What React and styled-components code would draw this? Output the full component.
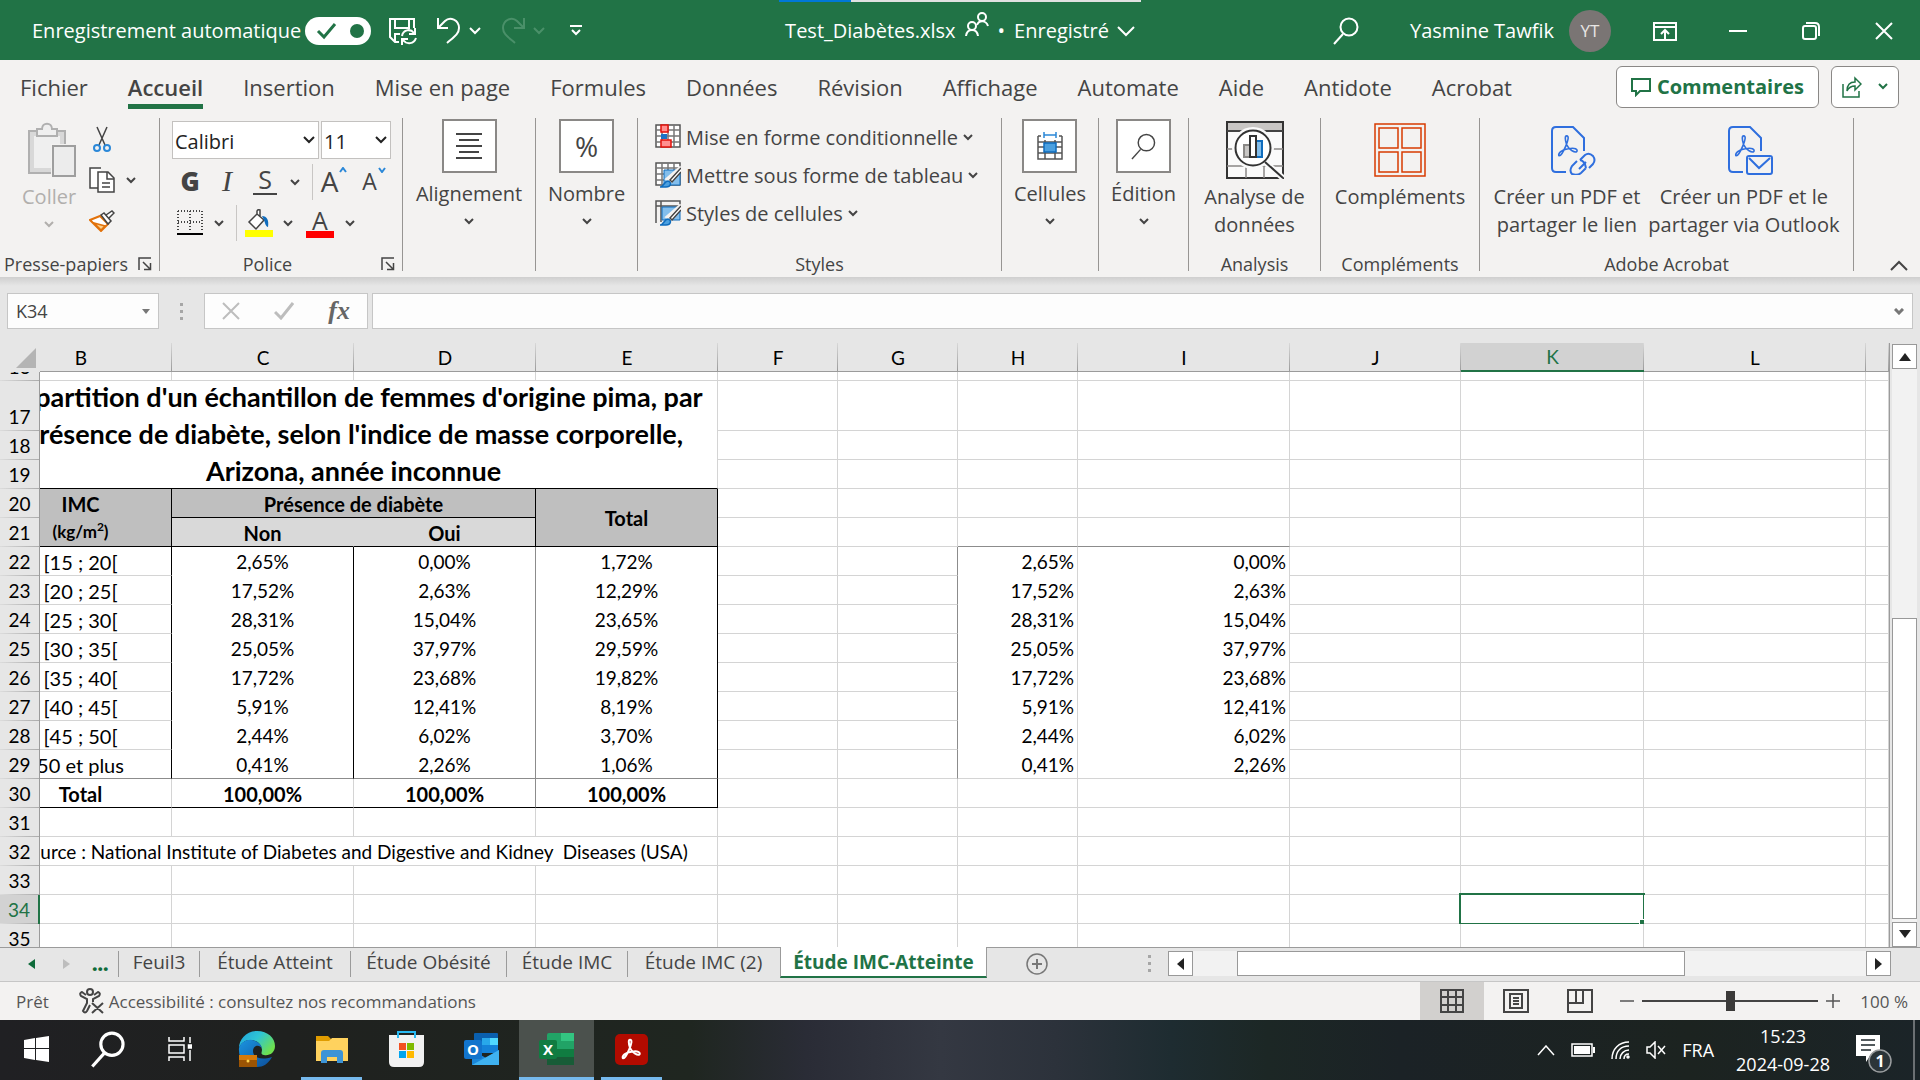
import React from "react";
import styled, { createGlobalStyle, css } from "styled-components";

const UI = `"Open Sans", "Noto Sans", sans-serif`;
const SHEET = `Lato, "Open Sans", sans-serif`;
const GREEN = "#217346";
const INK = "#444444";
const GRID = "#d4d4d4";
const GREY = "#8c8c8c";

const Global = createGlobalStyle`
  *, *::before, *::after { box-sizing: border-box; }
  body { margin: 0; font-family: ${UI}; color: ${INK}; overflow: hidden; }
  button, input, select { font: inherit; color: inherit; border-radius: 0; margin: 0; }
  button { background: none; border: 0; padding: 0; cursor: pointer; }
  svg { display: block; flex: none; }
`;

const Window = styled.div`
  display: flex;
  flex-direction: column;
  height: 100vh;
  background: #e6e6e6;
`;

/* ---------- small icons ---------- */

const Icon = ({ w, h, children, ...rest }) => (
  <svg width={w} height={h} viewBox={`0 0 ${w} ${h}`} fill="none" aria-hidden="true" {...rest}>
    {children}
  </svg>
);

const Chevron = ({ color = INK, w = 10, sw = 2 }) => (
  <Icon w={w} h={w / 2 + 2} stroke={color} strokeWidth={sw}>
    <path d={`M1 1 L${w / 2} ${w / 2} L${w - 1} 1`} />
  </Icon>
);

const Search = ({ w = 26, h = 28, color = "#fff", sw = 2 }) => (
  <svg width={w} height={h} viewBox="0 0 26 28" fill="none" stroke={color} strokeWidth={sw} aria-hidden="true">
    <circle cx="16" cy="10" r="8.5" />
    <path d="M10 17 L1 27" />
  </svg>
);

const Launcher = () => (
  <Icon w={14} h={14} stroke={INK} strokeWidth="1.5">
    <path d="M1 13V1H13M5 5L12 12M12.5 6V12.5H6" />
  </Icon>
);

/* ---------- title bar ---------- */

const TitleBar = styled.header`
  position: relative;
  display: grid;
  grid-template-columns: 1fr auto 1fr;
  align-items: center;
  height: 60px;
  padding-top: 2px;
  background: ${GREEN};
  color: #fff;
  font-size: 20px;
  line-height: 28px;
`;

const TitleGroup = styled.div`
  display: flex;
  align-items: center;
  gap: ${(p) => p.$gap}px;
  padding-left: ${(p) => p.$left || 0}px;
  justify-content: ${(p) => (p.$end ? "flex-end" : "flex-start")};
  white-space: nowrap;
`;

const TitleButton = styled.button`
  display: flex;
  align-items: center;
  gap: 8px;
  margin-left: ${(p) => p.$before || 0}px;
  margin-right: ${(p) => p.$after || 0}px;
`;

const Progress = styled.div`
  position: absolute;
  top: 0;
  left: 50%;
  margin-left: -181px;
  width: 362px;
  height: 2px;
  background: linear-gradient(to right, #0078d7 72px, #e1e1e1 72px);
`;

const AutoSave = styled.label`
  display: flex;
  align-items: center;
  gap: 4px;
  margin-right: 8px;
  cursor: pointer;
  input { position: absolute; opacity: 0; }
`;

const Avatar = styled.span`
  display: grid;
  place-items: center;
  width: 42px;
  height: 42px;
  border-radius: 50%;
  background: #7a7574;
  font-size: 17px;
  color: #e8e6e4;
`;

const WindowButtons = styled.div`
  display: flex;
  align-items: center;
  margin-left: 2px;
  button {
    display: grid;
    place-items: center;
    width: 73px;
    height: 40px;
  }
`;

function Title() {
  return (
    <TitleBar>
      <Progress />
      <TitleGroup $gap={10} $left={32}>
        <AutoSave>
          Enregistrement automatique
          <input type="checkbox" defaultChecked />
          <Icon w={66} h={28}>
            <rect width="66" height="28" rx="14" fill="#fff" />
            <path d="M13 14 L19 20 L30 7" stroke={GREEN} strokeWidth="3" />
            <circle cx="52" cy="14" r="7" fill={GREEN} />
          </Icon>
        </AutoSave>
        <TitleButton aria-label="Enregistrer">
          <Icon w={28} h={28} stroke="#fff" strokeWidth="2">
            <path d="M10 25H6L1 20V2H25V11" />
            <path d="M6 2V11H20V2M6 25V17H11" />
            <path d="M13 19C14 13 21 11 25 16M26 11V17H20M27 21C25 27 18 28 14 23M13 28V22H19" />
          </Icon>
        </TitleButton>
        <TitleButton aria-label="Annuler" $before={10}>
          <Icon w={24} h={28} stroke="#fff" strokeWidth="2">
            <path d="M1 1V11H11M1 11L8 4C13 -1 22 3 22 11C22 17 17 20 10 26" />
          </Icon>
          <Chevron color="#fff" w={12} />
        </TitleButton>
        <TitleButton aria-label="Rétablir" $before={10}>
          <Icon w={24} h={28} stroke="#4a9069" strokeWidth="2">
            <path d="M23 1V11H13M23 11L16 4C11 -1 2 3 2 11C2 17 7 20 14 26" />
          </Icon>
          <Chevron color="#4a9069" w={12} />
        </TitleButton>
        <TitleButton aria-label="Personnaliser" $before={14}>
          <Icon w={14} h={12} stroke="#fff" strokeWidth="2">
            <path d="M1 1H13M3 5L7 9L11 5" />
          </Icon>
        </TitleButton>
      </TitleGroup>
      <TitleGroup $gap={9}>
        Test_Diabètes.xlsx
        <Icon w={24} h={38} stroke="#fff" strokeWidth="2">
          <circle cx="17" cy="5" r="4" />
          <path d="M12 13C14 8 21 8 23 14" />
          <circle cx="7" cy="14" r="4" />
          <path d="M1 24C2 16 12 16 13 24" />
        </Icon>
        <span>•</span>
        <TitleButton>
          Enregistré
          <Chevron color="#fff" w={18} />
        </TitleButton>
      </TitleGroup>
      <TitleGroup $gap={15} $end>
        <TitleButton aria-label="Rechercher" $after={36}>
          <Search />
        </TitleButton>
        Yasmine Tawfik
        <Avatar>YT</Avatar>
        <WindowButtons>
          <button aria-label="Options du ruban">
            <Icon w={24} h={19} stroke="#fff" strokeWidth="2">
              <path d="M1 1H23V18H1ZM1 5H23M12 17V8M8 12L12 8L16 12" />
            </Icon>
          </button>
          <button aria-label="Réduire">
            <Icon w={18} h={2}><rect width="18" height="2" fill="#fff" /></Icon>
          </button>
          <button aria-label="Restaurer">
            <Icon w={18} h={18} stroke="#fff" strokeWidth="2">
              <rect x="1" y="4" width="13" height="13" rx="2" />
              <path d="M4 1H13Q17 1 17 5V14" />
            </Icon>
          </button>
          <button aria-label="Fermer">
            <Icon w={18} h={18} stroke="#fff" strokeWidth="2"><path d="M1 1L17 17M17 1L1 17" /></Icon>
          </button>
        </WindowButtons>
      </TitleGroup>
    </TitleBar>
  );
}

/* ---------- ribbon tabs ---------- */

const TabsRow = styled.nav`
  display: flex;
  align-items: center;
  height: 57px;
  padding: 0 21px 4px 20px;
  background: #f3f2f1;
`;

const RibbonTab = styled.button`
  height: 44px;
  margin-right: 40px;
  padding-top: 6px;
  border-bottom: 5px solid ${(p) => (p.$active ? GREEN : "transparent")};
  font-size: 22px;
  line-height: 30px;
  font-weight: ${(p) => (p.$active ? 600 : 400)};
  white-space: nowrap;
`;

const TabsSpacer = styled.div`
  flex: 1;
`;

const PillButton = styled.button`
  display: flex;
  align-items: center;
  justify-content: center;
  gap: ${(p) => p.$gap}px;
  width: ${(p) => p.$w}px;
  height: 42px;
  margin-left: 12px;
  border: 1px solid #8a8886;
  border-radius: 6px;
  background: #fff;
  color: ${GREEN};
  font-size: 20px;
  font-weight: 700;
`;

const TABS = ["Fichier", "Accueil", "Insertion", "Mise en page", "Formules", "Données", "Révision", "Affichage", "Automate", "Aide", "Antidote", "Acrobat"];

function Tabs() {
  return (
    <TabsRow>
      {TABS.map((t) => (
        <RibbonTab key={t} $active={t === "Accueil"}>{t}</RibbonTab>
      ))}
      <TabsSpacer />
      <PillButton $w={203} $gap={6}>
        <Icon w={20} h={20} stroke={GREEN} strokeWidth="2">
          <path d="M1 2H19V14H9L5 18V14H1Z" />
        </Icon>
        Commentaires
      </PillButton>
      <PillButton $w={68} $gap={16} aria-label="Partager">
        <Icon w={20} h={22} stroke={GREEN} strokeWidth="1.5">
          <path d="M1 8V21H17V15M5 15C5 9 8 6 13 6V2L19 8L13 14V10C9 10 7 11 5 15Z" />
        </Icon>
        <Chevron color={GREEN} w={10} />
      </PillButton>
    </TabsRow>
  );
}

/* ---------- ribbon ---------- */

const RibbonBar = styled.section`
  display: flex;
  height: 160px;
  background: #f3f2f1;
  font-size: 20px;
`;

const Group = styled.div`
  display: flex;
  flex-direction: column;
  flex: 0 0 ${(p) => p.$w}px;
`;

const Divider = styled.div`
  flex: 0 0 1px;
  height: 153px;
  margin-top: 1px;
  background: #979593;
`;

const GroupBody = styled.div`
  display: flex;
  flex: 1;
  justify-content: ${(p) => (p.$left ? "flex-start" : "center")};
  gap: ${(p) => p.$gap || 0}px;
  padding: ${(p) => p.$top || 0}px 0 0 ${(p) => p.$left || 0}px;
`;

const GroupFoot = styled.div`
  display: flex;
  align-items: center;
  height: 24px;
  padding-bottom: 2px;
  font-size: 18px;
  line-height: 22px;
  span { flex: 1; text-align: center; white-space: nowrap; }
  button { margin: 0 7px 0 6px; }
`;

const BigButton = styled.button`
  display: flex;
  flex-direction: column;
  align-items: center;
  align-self: flex-start;
  line-height: 28px;
  white-space: nowrap;
  color: ${(p) => (p.$off ? "#b1afad" : INK)};
  > svg:last-child { margin-top: 10px; }
`;

const BigIcon = styled.span`
  display: grid;
  place-items: center;
  height: 57px;
  margin-bottom: 5px;
  padding-left: ${(p) => p.$shift || 0}px;
`;

const BoxIcon = styled.span`
  display: grid;
  place-items: center;
  width: 55px;
  height: 54px;
  margin-bottom: 7px;
  border: 2px solid #8a8886;
  background: #fff;
  font-size: 28px;
`;

const Column = styled.div`
  display: flex;
  flex-direction: column;
  gap: ${(p) => p.$gap}px;
`;

const Line = styled.div`
  display: flex;
  align-items: center;
  height: ${(p) => p.$h}px;
`;

const Tool = styled.button`
  display: grid;
  place-items: center;
  align-content: center;
  width: ${(p) => p.$w}px;
  height: 100%;
  padding-bottom: ${(p) => (p.$text ? 3 : 0)}px;
  font-size: 24px;
  line-height: 28px;
`;

const ToolRule = styled.span`
  width: 1px;
  height: 36px;
  margin: 0 ${(p) => p.$r || 0}px 0 6px;
  background: #c8c6c4;
`;

const Picker = styled.span`
  display: grid;
  align-items: center;
  width: ${(p) => p.$w}px;
  height: 38px;
  margin-right: 2px;
  border: 1px solid #c3c1bf;
  background: #fff;
  color: #222;
  select {
    grid-area: 1 / 1;
    height: 100%;
    appearance: none;
    border: 0;
    padding: 2px 2px 0;
    background: transparent;
    font-size: 20px;
  }
  svg { grid-area: 1 / 1; justify-self: end; margin-right: 3px; pointer-events: none; }
`;

const StyleButton = styled.button`
  display: flex;
  align-items: center;
  gap: 5px;
  height: 38px;
  white-space: nowrap;
`;

const CollapseCell = styled.div`
  display: flex;
  flex: 1;
  align-items: flex-end;
  justify-content: flex-end;
  padding: 0 12px 6px 0;
`;

const Bold = styled.b`
  font-size: 26px;
  font-weight: 800;
`;

const Italic = styled.i`
  font-family: "Liberation Serif", serif;
  font-size: 30px;
`;

const Underlined = styled.span`
  padding: 0 5px;
  border-bottom: 2px solid ${INK};
  font-size: 25px;
  line-height: 27px;
`;

const SizedLetter = styled.span`
  display: flex;
  align-items: flex-start;
  gap: 1px;
  font-size: ${(p) => p.$size}px;
`;

const ColorLetter = styled.span`
  width: 28px;
  border-bottom: 7px solid #f00;
  font-size: 25px;
  line-height: 22px;
  text-align: center;
`;

const DataGrid = ({ children }) => (
  <Icon w={26} h={26}>
    <path d="M1 1H25V23H1Z" fill="#fff" stroke="#555" strokeWidth="1.5" />
    <path d="M1 6H25M1 12H25M1 18H25M7 1V23M13 1V23M19 1V23" stroke="#777" strokeWidth="1.5" />
    {children}
  </Icon>
);

const BrushMark = () => (
  <>
    <path d="M26 5L16 19L12 17Z" fill="#fff" stroke="#f3f2f1" strokeWidth="3" />
    <path d="M26 6L15 18L17 20L26 10" fill="#fff" stroke="#444" strokeWidth="1.5" />
    <path d="M5 25C9 25 9 19 13 19C17 20 16 25 11 25Z" fill="#4ba0e0" stroke="#0f6cbd" strokeWidth="1.5" />
  </>
);

const AcrobatMark = ({ color, scale = 1, x = 0, y = 0, sw = 1.6 }) => (
  <path
    transform={`translate(${x} ${y}) scale(${scale})`}
    d="M1 24C0 21 4 17 12 16C20 14 23 17 22 19C20 21 13 18 10 11C8 5 8 1 10 1C13 1 12 6 9 13C6 20 3 25 1 24Z"
    stroke={color}
    strokeWidth={sw / scale}
    strokeLinejoin="round"
  />
);

const PdfPage = () => (
  <>
    <path d="M16 47H6Q2 47 2 43V6Q2 2 6 2H23L34 13V26" stroke="#2f6fde" strokeWidth="2" />
    <AcrobatMark color="#2f6fde" scale={0.86} x={8} y={10} />
  </>
);

function Ribbon() {
  return (
    <RibbonBar>
      <Group $w={159}>
        <GroupBody $left={22} $gap={13} $top={4}>
          <BigButton $off>
            <BigIcon $shift={5}>
              <Icon w={49} h={55}>
                <path d="M2 9H38V51H2Z" fill="#d8d8d8" stroke="#b0b0b0" strokeWidth="2" />
                <path d="M7 14H33V46H7Z" fill="#efefef" />
                <path d="M10 14V7H15C15 0 25 0 25 7H30V14Z" fill="#efefef" stroke="#b0b0b0" strokeWidth="2" />
                <path d="M24 22H49V55H24Z" fill="#f3f2f1" />
                <path d="M26 24H48V54H26Z" fill="#ececec" stroke="#9e9e9e" strokeWidth="2" />
              </Icon>
            </BigIcon>
            Coller
            <Chevron color="#b1afad" />
          </BigButton>
          <Column $gap={5}>
            <Line $h={36}>
              <Tool $w={26} aria-label="Couper">
                <Icon w={18} h={27} strokeWidth="1.5">
                  <path d="M4 1L12 19M14 1L6 19" stroke="#444" />
                  <circle cx="4" cy="22" r="3" stroke="#2b88d8" strokeWidth="2" />
                  <circle cx="14" cy="22" r="3" stroke="#2b88d8" strokeWidth="2" />
                </Icon>
              </Tool>
            </Line>
            <Line $h={36}>
              <Tool $w={26} aria-label="Copier">
                <Icon w={26} h={26} stroke="#444" strokeWidth="1.5">
                  <path d="M9 21H1V1H12" fill="#fff" />
                  <path d="M9 5H19L25 11V25H9Z" fill="#fff" />
                  <path d="M18 5V12H25M13 16H21M13 20H21" />
                </Icon>
              </Tool>
              <Tool $w={32} aria-label="Options de copie"><Chevron /></Tool>
            </Line>
            <Line $h={36}>
              <Tool $w={26} aria-label="Reproduire la mise en forme">
                <Icon w={26} h={22} strokeWidth="1.5">
                  <path d="M1 10L11 6L19 14L12 21Z" fill="#fff" stroke="#e2720b" strokeWidth="2" />
                  <path d="M5 13L16 16L12 20Z" fill="#fbd08a" stroke="#e2720b" />
                  <path d="M12 5L15 3L22 11L19 14ZM17 5L23 1L25 3L20 8" fill="#fff" stroke="#444" />
                </Icon>
              </Tool>
            </Line>
          </Column>
        </GroupBody>
        <GroupFoot><span>Presse-papiers</span><button aria-label="Options du presse-papiers"><Launcher /></button></GroupFoot>
      </Group>
      <Divider />
      <Group $w={242}>
        <GroupBody $left={12} $top={4}>
          <Column $gap={5}>
            <Line $h={38}>
              <Picker $w={147}>
                <select aria-label="Police" defaultValue="Calibri"><option>Calibri</option></select>
                <Chevron color="#222" w={12} />
              </Picker>
              <Picker $w={70}>
                <select aria-label="Taille de police" defaultValue="11"><option>11</option></select>
                <Chevron color="#222" w={12} />
              </Picker>
            </Line>
            <Line $h={36}>
              <Tool $w={36} $text><Bold>G</Bold></Tool>
              <Tool $w={38} $text><Italic>I</Italic></Tool>
              <Tool $w={38} $text><Underlined>S</Underlined></Tool>
              <Tool $w={22} aria-label="Options de soulignement"><Chevron /></Tool>
              <ToolRule />
              <Tool $w={42} $text aria-label="Augmenter la taille">
                <SizedLetter $size={28}>A<Icon w={8} h={6} stroke="#2b88d8" strokeWidth="2"><path d="M1 5L4 1L7 5" /></Icon></SizedLetter>
              </Tool>
              <Tool $w={38} $text aria-label="Réduire la taille">
                <SizedLetter $size={23}>A<Icon w={8} h={6} stroke="#2b88d8" strokeWidth="2"><path d="M1 1L4 5L7 1" /></Icon></SizedLetter>
              </Tool>
            </Line>
            <Line $h={36}>
              <Tool $w={36} aria-label="Bordures">
                <Icon w={26} h={26}>
                  <path d="M1 1H25M1 1V22M25 1V22M13 1V22M1 12H25" stroke="#444" strokeWidth="2" strokeDasharray="1 2" />
                  <path d="M0 24H26" stroke="#000" strokeWidth="2" />
                </Icon>
              </Tool>
              <Tool $w={22} aria-label="Options de bordures"><Chevron /></Tool>
              <ToolRule $r={2} />
              <Tool $w={40} aria-label="Couleur de remplissage">
                <Icon w={28} h={28}>
                  <rect y="21" width="28" height="7" fill="#ff0" />
                  <path d="M12 5L4 13L11 20L19 11L12 5V2Q13 0 15 1V8" fill="#fff" stroke="#444" strokeWidth="1.5" />
                  <path d="M17 7C22 7 24 11 23 18C21 18 20 14 19 11Z" fill="#0f6cbd" />
                </Icon>
              </Tool>
              <Tool $w={18} aria-label="Options de remplissage"><Chevron /></Tool>
              <Tool $w={46} aria-label="Couleur de police"><ColorLetter>A</ColorLetter></Tool>
              <Tool $w={14} aria-label="Options de couleur"><Chevron /></Tool>
            </Line>
          </Column>
        </GroupBody>
        <GroupFoot><span>Police</span><button aria-label="Options de police"><Launcher /></button></GroupFoot>
      </Group>
      <Divider />
      <Group $w={132}>
        <GroupBody $top={2}>
          <BigButton>
            <BoxIcon>
              <Icon w={26} h={26} stroke="#444" strokeWidth="2">
                <path d="M0 1H26M3 7H23M0 13H26M3 19H23M0 25H26" />
              </Icon>
            </BoxIcon>
            Alignement
            <Chevron />
          </BigButton>
        </GroupBody>
      </Group>
      <Divider />
      <Group $w={101}>
        <GroupBody $top={2}>
          <BigButton><BoxIcon>%</BoxIcon>Nombre<Chevron /></BigButton>
        </GroupBody>
      </Group>
      <Divider />
      <Group $w={363}>
        <GroupBody $left={17} $top={1}>
          <Column $gap={0}>
            <StyleButton>
              <DataGrid>
                <path d="M6 1H13V8H6ZM6 16H16V23H6Z" fill="#ff8f8f" stroke="#e3120b" strokeWidth="1.5" />
                <path d="M6 10H12V15H6Z" fill="#1a73c7" />
              </DataGrid>
              Mise en forme conditionnelle<Chevron w={10} />
            </StyleButton>
            <StyleButton>
              <DataGrid><path d="M9 8H25V23H9Z" fill="#83beec" stroke="#0f6cbd" /><BrushMark /></DataGrid>
              Mettre sous forme de tableau<Chevron w={10} />
            </StyleButton>
            <StyleButton>
              <Icon w={26} h={26}>
                <path d="M1 1H25V6H1ZM1 23V1M6 1V22" stroke="#555" strokeWidth="1.5" />
                <path d="M7 7H25V20H7Z" fill="#83beec" stroke="#0f6cbd" />
                <BrushMark />
              </Icon>
              Styles de cellules<Chevron w={10} />
            </StyleButton>
          </Column>
        </GroupBody>
        <GroupFoot><span>Styles</span></GroupFoot>
      </Group>
      <Divider />
      <Group $w={96}>
        <GroupBody $top={2}>
          <BigButton>
            <BoxIcon>
              <Icon w={26} h={28}>
                <path d="M1 4V27H25V4M1 10H25M1 21H25M8 8V27M18 8V27M1 4H4M22 4H25M1 15H25" stroke="#555" strokeWidth="1.5" />
                <path d="M7 11H19V20H7Z" fill="#4ba0e0" stroke="#0f6cbd" strokeWidth="1.5" />
                <path d="M7 3H19M7 0V6M19 0V6" stroke="#2b88d8" strokeWidth="1.5" />
              </Icon>
            </BoxIcon>
            Cellules
            <Chevron />
          </BigButton>
        </GroupBody>
      </Group>
      <Divider />
      <Group $w={89}>
        <GroupBody $top={2}>
          <BigButton><BoxIcon><Search w={25} h={27} color="#444" sw={1.5} /></BoxIcon>Édition<Chevron /></BigButton>
        </GroupBody>
      </Group>
      <Divider />
      <Group $w={131}>
        <GroupBody $top={4}>
          <BigButton>
            <BigIcon>
              <Icon w={58} h={58}>
                <path d="M1 1H57V57H1Z" fill="#fafafa" stroke="#333" strokeWidth="2" />
                <path d="M2 2H56V9H2Z" fill="#c8c6c4" />
                <path d="M1 10H57" stroke="#444" strokeWidth="2" />
                <path d="M1 28H57M1 45H57M20 45V57M38 45V57" stroke="#8a8886" strokeWidth="1.5" />
                <circle cx="27" cy="27" r="21" fill="#fafafa" />
                <circle cx="27" cy="27" r="17.5" fill="#fff" stroke="#333" strokeWidth="2" />
                <path d="M40 42L57 57" stroke="#fafafa" strokeWidth="6" />
                <path d="M39 41L57 57" stroke="#333" strokeWidth="2" />
                <path d="M18 24H24V36H18Z" fill="#c8c6c4" stroke="#8a8886" strokeWidth="2" />
                <path d="M30 20H36V36H30Z" fill="#83beec" stroke="#0f6cbd" strokeWidth="2" />
                <path d="M24 15H30V36H24Z" fill="#fff" stroke="#333" strokeWidth="2" />
              </Icon>
            </BigIcon>
            <span>Analyse de<br />données</span>
          </BigButton>
        </GroupBody>
        <GroupFoot><span>Analysis</span></GroupFoot>
      </Group>
      <Divider />
      <Group $w={158}>
        <GroupBody $top={4}>
          <BigButton>
            <BigIcon>
              <Icon w={52} h={54} stroke="#d83b01" strokeWidth="1.5">
                <path d="M1 1H51V53H1ZM5 5H24V25H5ZM28 5H47V25H28ZM5 29H24V49H5ZM28 29H47V49H28Z" />
              </Icon>
            </BigIcon>
            Compléments
          </BigButton>
        </GroupBody>
        <GroupFoot><span>Compléments</span></GroupFoot>
      </Group>
      <Divider />
      <Group $w={373}>
        <GroupBody $top={4} $gap={8}>
          <BigButton>
            <BigIcon $shift={12}>
              <Icon w={46} h={50} stroke="#2f6fde" strokeWidth="2">
                <PdfPage />
                <path d="M30 35L35 30Q39 27 43 31Q46 35 43 39L39 43M36 37L29 44" />
                <path d="M27 36L22 41Q19 46 22 49Q27 51 31 48L36 43M30 35Q35 36 36 43" />
              </Icon>
            </BigIcon>
            <span>Créer un PDF et<br />partager le lien</span>
          </BigButton>
          <BigButton>
            <BigIcon $shift={12}>
              <Icon w={46} h={50} stroke="#2f6fde" strokeWidth="2">
                <PdfPage />
                <rect x="20" y="31" width="25" height="18" rx="2" fill="#f3f2f1" />
                <path d="M22 33L32 43L43 33" />
              </Icon>
            </BigIcon>
            <span>Créer un PDF et le<br />partager via Outlook</span>
          </BigButton>
        </GroupBody>
        <GroupFoot><span>Adobe Acrobat</span></GroupFoot>
      </Group>
      <Divider />
      <CollapseCell>
        <button aria-label="Réduire le ruban">
          <Icon w={18} h={11} stroke="#444" strokeWidth="2"><path d="M1 10L9 2L17 10" /></Icon>
        </button>
      </CollapseCell>
    </RibbonBar>
  );
}

/* ---------- formula bar ---------- */

const FormulaRow = styled.div`
  display: flex;
  height: 66px;
  padding: 16px 7px 14px;
  background: linear-gradient(#cfcfcf, #e6e6e6 9px);
`;

const Field = styled.div`
  display: flex;
  align-items: center;
  justify-content: ${(p) => (p.$spread ? "space-around" : "flex-start")};
  flex: ${(p) => (p.$w ? `0 0 ${p.$w}px` : "1")};
  min-width: 0;
  height: 36px;
  padding: 0 ${(p) => (p.$spread ? 0 : 8)}px;
  border: 1px solid #c6c6c6;
  background: #fdfdfd;
  input {
    flex: 1;
    width: 0;
    min-width: 0;
    border: 0;
    padding: 0;
    background: transparent;
    font-size: 18px;
  }
`;

const Dots = styled.div`
  display: grid;
  align-content: center;
  justify-content: center;
  gap: 4px;
  width: ${(p) => p.$w}px;
  height: ${(p) => p.$h}px;
  i { width: 3px; height: 3px; background: #a6a6a6; }
`;

const FxGap = styled.div`
  width: 4px;
`;

const Fx = styled.i`
  font-family: "Liberation Serif", serif;
  font-size: 26px;
  font-weight: 700;
  line-height: 28px;
  color: #666;
`;

function FormulaBar() {
  return (
    <FormulaRow>
      <Field $w={152}>
        <input aria-label="Zone de nom" defaultValue="K34" />
        <button aria-label="Choisir un nom"><Icon w={8} h={5}><path d="M0 0H8L4 5Z" fill="#777" /></Icon></button>
      </Field>
      <Dots $w={45} $h={36}><i /><i /><i /></Dots>
      <Field $w={164} $spread>
        <button aria-label="Annuler la saisie">
          <Icon w={18} h={18} stroke="#bdbdbd" strokeWidth="2"><path d="M1 1L17 17M17 1L1 17" /></Icon>
        </button>
        <button aria-label="Valider">
          <Icon w={20} h={18} stroke="#bdbdbd" strokeWidth="3"><path d="M1 10L7 16L19 1" /></Icon>
        </button>
        <button aria-label="Insérer une fonction"><Fx>fx</Fx></button>
      </Field>
      <FxGap />
      <Field>
        <input aria-label="Barre de formule" />
        <button aria-label="Développer la barre"><Chevron color="#777" w={10} sw={3} /></button>
      </Field>
    </FormulaRow>
  );
}

/* ---------- worksheet ---------- */

const SheetArea = styled.main`
  display: flex;
  flex: 1;
  min-height: 0;
  font-family: ${SHEET};
  font-size: 19px;
  color: #000;
`;

const RowHeads = styled.div`
  flex: 0 0 40px;
  overflow: hidden;
`;

const Corner = styled.div`
  display: grid;
  place-items: center end;
  height: 29px;
  padding-right: 4px;
`;

const RowHead = styled.div`
  display: flex;
  align-items: flex-end;
  justify-content: center;
  height: ${(p) => p.$h}px;
  overflow: hidden;
  border-right: 1px solid #9b9b9b;
  background: linear-gradient(to right, #dcdcdc, #ababab) bottom / 100% 1px no-repeat;
  line-height: 28px;
  ${(p) =>
    p.$active &&
    css`
      border-right: 2px solid ${GREEN};
      background-color: #d2d2d2;
      color: ${GREEN};
    `}
`;

const GridView = styled.div`
  flex: 1;
  min-width: 0;
  overflow: hidden;
  border-right: 1px solid #9b9b9b;
`;

const Table = styled.table`
  width: calc(100% + 50px);
  margin-left: -50px;
  table-layout: fixed;
  border-collapse: separate;
  border-spacing: 0;
  background: #fff;
`;

const ColHead = styled.th`
  height: 29px;
  padding: 1px 0 0;
  border-bottom: 1px solid #9b9b9b;
  background: linear-gradient(#d8d8d8, #9b9b9b) right / 1px 100% no-repeat #e6e6e6;
  font-weight: 400;
  line-height: 24px;
  ${(p) =>
    p.$active &&
    css`
      border-bottom: 2px solid ${GREEN};
      background-color: #d2d2d2;
      color: ${GREEN};
    `}
`;

const Cell = styled.td`
  position: relative;
  height: ${(p) => p.$h || 29}px;
  padding: ${(p) => (p.$flat ? 0 : 1)}px ${(p) => (p.$align === "right" ? 3 : 0)}px 0 0;
  border-right: 1px solid ${(p) => p.$r || GRID};
  border-bottom: ${(p) => (p.$b === "none" ? "0" : `1px solid ${p.$b || GRID}`)};
  background: ${(p) => p.$bg || "#fff"};
  text-align: ${(p) => p.$align || "center"};
  font-weight: ${(p) => (p.$bold ? 700 : 400)};
  line-height: ${(p) => p.$lh || 24}px;
  white-space: pre;
  font-size: ${(p) => p.$size || (p.$bold ? 20 : 19)}px;
  ${(p) =>
    p.$selected &&
    css`
      &::before {
        content: "";
        position: absolute;
        inset: -2px;
        border: 2px solid ${GREEN};
      }
      &::after {
        content: "";
        position: absolute;
        right: -4px;
        bottom: -4px;
        width: 8px;
        height: 8px;
        border: solid #fff;
        border-width: 1px 0 0 1px;
        background: ${GREEN};
      }
    `}
`;

const Heading = styled.div`
  display: grid;
  align-content: center;
  justify-content: center;
  justify-items: center;
  height: 105px;
  padding-bottom: 2px;
  font-size: 27px;
  line-height: 37px;
`;

const TwoLines = styled.div`
  display: grid;
  grid-template-rows: 28px 28px;
  height: 56px;
`;

const Unit = styled.span`
  font-size: 17px;
  sup { font-size: 12px; line-height: 0; }
`;

const VScroll = styled.div`
  display: grid;
  grid-template-rows: 25px 250fr 302fr 3fr 25px;
  flex: 0 0 30px;
  padding: 1px 3px 0 2px;
`;

const ScrollButton = styled.button`
  display: grid;
  place-items: center;
  border: 1px solid #999;
  background: #fff;
`;

const Thumb = styled.div`
  border: 1px solid #999;
  background: #fff;
`;

const Track = styled.div`
  background: #f2f2f2;
`;

const COLS = [["B", 182], ["C", 182], ["D", 182], ["E", 182], ["F", 120], ["G", 120], ["H", 120], ["I", 212], ["J", 171], ["K", 183], ["L", 222], ["", null]];
const ROWS = Array.from({ length: 20 }, (_, i) => i + 16);
const rowHeight = (n) => (n === 16 ? 9 : n === 17 ? 50 : 29);

const DATA = [
  ["[15 ; 20[", "2,65%", "0,00%", "1,72%"],
  ["[20 ; 25[", "17,52%", "2,63%", "12,29%"],
  ["[25 ; 30[", "28,31%", "15,04%", "23,65%"],
  ["[30 ; 35[", "25,05%", "37,97%", "29,59%"],
  ["[35 ; 40[", "17,72%", "23,68%", "19,82%"],
  ["[40 ; 45[", "5,91%", "12,41%", "8,19%"],
  ["[45 ; 50[", "2,44%", "6,02%", "3,70%"],
  ["50 et plus", "0,41%", "2,26%", "1,06%"],
];

const blanks = (n, from, extra = {}) =>
  Array.from({ length: n }, (_, i) => <Cell key={`x${from + i}`} {...(extra[from + i] || {})} />);

function rowCells(n) {
  if (n === 16) return Array.from({ length: 12 }, (_, i) => <Cell key={i} $h={9} $lh={1} $flat />);
  if (n === 17)
    return [
      <Cell key="t" colSpan={4} rowSpan={3} $b="#000" $bold $flat>
        <Heading>
          <span>Répartition d'un échantillon de femmes d'origine pima, par</span>
          <span>présence de diabète, selon l'indice de masse corporelle,</span>
          <span>Arizona, année inconnue</span>
        </Heading>
      </Cell>,
      ...Array.from({ length: 8 }, (_, i) => <Cell key={i} $h={50} />),
    ];
  if (n === 18 || n === 19) return blanks(8, 4);
  if (n === 20)
    return [
      <Cell key="b" rowSpan={2} $bg="#bfbfbf" $b="#000" $r="#000" $lh={28} $bold $flat>
        <TwoLines>
          <span>IMC</span>
          <Unit>(kg/m<sup>2</sup>)</Unit>
        </TwoLines>
      </Cell>,
      <Cell key="c" colSpan={2} $bg="#bfbfbf" $b="#000" $r="#000" $bold>Présence de diabète</Cell>,
      <Cell key="e" rowSpan={2} $bg="#bfbfbf" $b="#000" $r="#000" $bold>Total</Cell>,
      ...blanks(8, 4),
    ];
  if (n === 21)
    return [
      <Cell key="c" $bg="#d9d9d9" $b="#000" $r="#d9d9d9" $bold>Non</Cell>,
      <Cell key="d" $bg="#d9d9d9" $b="#000" $r="#000" $bold>Oui</Cell>,
      ...blanks(8, 4, { 6: { $b: GREY }, 7: { $b: GREY } }),
    ];
  if (n <= 29) {
    const d = DATA[n - 22];
    const end = n === 29 ? GREY : "none";
    const helper = n === 29 ? GRID : "none";
    return [
      <Cell key="b" $r="#000" $b={n === 29 ? GREY : GRID} $size={20}>{d[0]}</Cell>,
      <Cell key="c" $r="#000" $b={end}>{d[1]}</Cell>,
      <Cell key="d" $r={GREY} $b={end}>{d[2]}</Cell>,
      <Cell key="e" $r="#000" $b={end}>{d[3]}</Cell>,
      <Cell key="f" />,
      <Cell key="g" $r={GREY} />,
      <Cell key="h" $align="right" $b={helper}>{d[1]}</Cell>,
      <Cell key="i" $align="right" $b={helper}>{d[2]}</Cell>,
      ...blanks(4, 8),
    ];
  }
  if (n === 30)
    return [
      <Cell key="b" $b="#000" $bold>Total</Cell>,
      <Cell key="c" $b="#000" $bold>100,00%</Cell>,
      <Cell key="d" $b="#000" $r={GREY} $bold>100,00%</Cell>,
      <Cell key="e" $b="#000" $r="#000" $bold>100,00%</Cell>,
      ...blanks(8, 4),
    ];
  if (n === 32)
    return [
      <Cell key="s" colSpan={4}>Source : National Institute of Diabetes and Digestive and Kidney  Diseases (USA)</Cell>,
      ...blanks(8, 4),
    ];
  if (n === 34) return blanks(12, 0, { 9: { $selected: true } });
  return blanks(12, 0);
}

function Sheet() {
  return (
    <SheetArea>
      <RowHeads>
        <Corner><Icon w={20} h={20}><path d="M20 0V20H0Z" fill="#b4b4b4" /></Icon></Corner>
        {ROWS.map((n) => (
          <RowHead key={n} $h={rowHeight(n)} $active={n === 34}>{n}</RowHead>
        ))}
      </RowHeads>
      <GridView>
        <Table>
          <colgroup>
            {COLS.map(([c, w]) => <col key={c} width={w || undefined} />)}
          </colgroup>
          <thead>
            <tr>{COLS.map(([c]) => <ColHead key={c} $active={c === "K"}>{c}</ColHead>)}</tr>
          </thead>
          <tbody>
            {ROWS.map((n) => <tr key={n}>{rowCells(n)}</tr>)}
          </tbody>
        </Table>
      </GridView>
      <VScroll>
        <ScrollButton aria-label="Haut"><Icon w={12} h={8}><path d="M0 8H12L6 0Z" fill="#222" /></Icon></ScrollButton>
        <Track />
        <Thumb />
        <Track />
        <ScrollButton aria-label="Bas"><Icon w={12} h={8}><path d="M0 0H12L6 8Z" fill="#222" /></Icon></ScrollButton>
      </VScroll>
    </SheetArea>
  );
}

/* ---------- sheet tabs ---------- */

const SheetTabs = styled.div`
  display: flex;
  align-items: flex-start;
  height: 35px;
  padding-right: 29px;
  border-top: 1px solid #9b9b9b;
  border-bottom: 1px solid #c6c6c6;
  background: #e6e6e6;
  font-size: 19px;
`;

const TabNav = styled.div`
  display: flex;
  align-items: center;
  gap: 28px;
  width: 119px;
  height: 26px;
  margin-top: 3px;
  padding: 0 8px 0 28px;
  border-right: 1px solid #9b9b9b;
`;

const Ellipsis = styled.button`
  color: #0e6b3a;
  font-weight: 800;
  line-height: 24px;
  margin-left: -6px;
`;

const SheetTab = styled.button`
  width: ${(p) => p.$w}px;
  height: 26px;
  margin-top: 3px;
  padding-bottom: 4px;
  border-right: 1px solid ${(p) => (p.$last ? "transparent" : "#9b9b9b")};
  line-height: 22px;
  white-space: nowrap;
  ${(p) =>
    p.$active &&
    css`
      height: 31px;
      margin-top: -1px;
      padding: 0;
      border: solid #9b9b9b;
      border-width: 0 1px;
      border-bottom: 2px solid ${GREEN};
      background: #fff;
      color: ${GREEN};
      font-weight: 700;
    `}
`;

const AddSheet = styled.button`
  margin: 5px 0 0 39px;
`;

const HScroll = styled.div`
  display: grid;
  grid-template-columns: 25px 44fr 448fr 181fr 25px;
  flex: 0 1 723px;
  height: 25px;
  margin-top: 3px;
`;

const Tail = styled.div`
  display: flex;
  flex: 1;
  justify-content: flex-end;
`;

const SHEETS = [["Feuil3", 81], ["Étude Atteint", 151], ["Étude Obésité", 156], ["Étude IMC", 121], ["Étude IMC (2)", 152]];

function SheetBar() {
  return (
    <SheetTabs>
      <TabNav>
        <button aria-label="Feuille précédente"><Icon w={7} h={10}><path d="M7 0V10L0 5Z" fill="#0e6b3a" /></Icon></button>
        <button aria-label="Feuille suivante"><Icon w={7} h={10}><path d="M0 0V10L7 5Z" fill="#bdbdbd" /></Icon></button>
        <Ellipsis>...</Ellipsis>
      </TabNav>
      {SHEETS.map(([s, w], i) => <SheetTab key={s} $w={w} $last={i === 4}>{s}</SheetTab>)}
      <SheetTab $w={207} $active>Étude IMC-Atteinte</SheetTab>
      <AddSheet aria-label="Nouvelle feuille">
        <Icon w={22} h={22} stroke="#777" strokeWidth="1.5">
          <circle cx="11" cy="11" r="10" />
          <path d="M11 6V16M6 11H16" strokeWidth="2" />
        </Icon>
      </AddSheet>
      <Tail>
        <Dots $w={38} $h={30}><i /><i /><i /></Dots>
        <HScroll>
          <ScrollButton aria-label="Gauche"><Icon w={7} h={12}><path d="M7 0V12L0 6Z" fill="#222" /></Icon></ScrollButton>
          <Track />
          <Thumb />
          <Track />
          <ScrollButton aria-label="Droite"><Icon w={7} h={12}><path d="M0 0V12L7 6Z" fill="#222" /></Icon></ScrollButton>
        </HScroll>
      </Tail>
    </SheetTabs>
  );
}

/* ---------- status bar ---------- */

const Status = styled.footer`
  display: flex;
  align-items: center;
  height: 38px;
  padding: 0 12px 0 16px;
  background: #f3f2f1;
  font-size: 17px;
  color: #555;
`;

const A11y = styled.button`
  display: flex;
  align-items: center;
  gap: 4px;
  margin: 0 auto 0 30px;
`;

const ViewButton = styled.button`
  display: grid;
  place-items: center;
  width: 64px;
  height: 38px;
  background: ${(p) => (p.$active ? "#d2d0ce" : "none")};
`;

const Zoom = styled.div`
  display: flex;
  align-items: center;
  gap: 8px;
  margin-left: 8px;
`;

const Slider = styled.input`
  appearance: none;
  width: 176px;
  height: 20px;
  background: linear-gradient(#444, #444) center / 100% 2px no-repeat;
  &::-webkit-slider-thumb {
    appearance: none;
    width: 9px;
    height: 20px;
    background: #3b3a39;
  }
`;

const Percent = styled.span`
  margin-left: 12px;
`;

function StatusBar() {
  return (
    <Status>
      Prêt
      <A11y>
        <Icon w={26} h={26} stroke="#444" strokeWidth="2">
          <circle cx="11" cy="4" r="3" />
          <path d="M7 7L3 4Q0 5 2 8L8 11V15L4 23Q6 26 8 23L11 17M15 7L19 4Q22 5 20 8L14 11V14M13 15L24 25M24 15L13 25" />
        </Icon>
        Accessibilité : consultez nos recommandations
      </A11y>
      <ViewButton $active aria-label="Normal">
        <Icon w={24} h={24} stroke="#444" strokeWidth="2"><path d="M1 1H23V23H1ZM1 8H23M1 16H23M8 1V23M16 1V23" /></Icon>
      </ViewButton>
      <ViewButton aria-label="Mise en page">
        <Icon w={26} h={24} stroke="#444" strokeWidth="2"><path d="M1 1H25V23H1ZM7 5H19V19H7ZM10 9H16M10 12H16M10 15H16" /></Icon>
      </ViewButton>
      <ViewButton aria-label="Aperçu des sauts de page">
        <Icon w={26} h={24} stroke="#444" strokeWidth="2"><path d="M1 1H25V23H1ZM1 14H16V1M9 1V14" /></Icon>
      </ViewButton>
      <Zoom>
        <button aria-label="Zoom arrière"><Icon w={14} h={14} stroke="#555" strokeWidth="1.5"><path d="M0 7H14" /></Icon></button>
        <Slider type="range" min="0" max="100" defaultValue="50" aria-label="Zoom" />
        <button aria-label="Zoom avant"><Icon w={14} h={14} stroke="#555" strokeWidth="1.5"><path d="M0 7H14M7 0V14" /></Icon></button>
        <Percent>100 %</Percent>
      </Zoom>
    </Status>
  );
}

/* ---------- taskbar ---------- */

const Taskbar = styled.footer`
  display: flex;
  align-items: stretch;
  height: 60px;
  padding-right: 5px;
  background: linear-gradient(to right, #202023 0, #1f211f 15%, #1f2620 36%, #2a2c36 42%, #343842 49%, #2c323b 55%, #1e2c31 61%, #1c2725 66%, #1b2226 73%, #1c2320 88%, #1b2428 100%);
  color: #fff;
`;

const SystemButtons = styled.div`
  display: flex;
  margin-right: 3px;
`;

const TaskButton = styled.button`
  display: grid;
  place-items: center;
  width: ${(p) => (p.$app ? 75 : 72)}px;
  background: ${(p) => (p.$active ? "#4b514d" : "none")};
  border-bottom: 3px solid ${(p) => (p.$active ? "#76b9ed" : "transparent")};
  padding-top: 1px;
  ${(p) =>
    p.$open &&
    css`
      background: linear-gradient(#76b9ed, #76b9ed) center bottom / 61px 3px no-repeat border-box;
    `}
`;

const Tray = styled.div`
  display: flex;
  align-items: center;
  gap: 16px;
  margin-left: auto;
  font-size: 18px;
  line-height: 28px;
`;

const Clock = styled.div`
  margin: 0 10px 0 6px;
  text-align: center;
`;

const ShowDesktop = styled.span`
  width: 2px;
  height: 60px;
  margin-left: 3px;
  background: #6b7073;
`;

function Tasks() {
  return (
    <Taskbar>
      <SystemButtons>
        <TaskButton aria-label="Démarrer">
          <Icon w={25} h={26}>
            <path d="M0 4L11 2V12H0ZM12 2L25 0V12H12ZM0 13H11V24L0 22ZM12 13H25V26L12 24Z" fill="#fff" />
          </Icon>
        </TaskButton>
        <TaskButton aria-label="Rechercher"><Search w={34} h={37} sw={2.4} /></TaskButton>
        <TaskButton aria-label="Vue des tâches">
          <Icon w={24} h={24} stroke="#fff" strokeWidth="1.5">
            <path d="M1 0V4H16V0M1 24V20H16V24M1 8H16V16H1ZM22 0V6M22 13V24" />
            <rect x="20.500" y="8" width="3" height="3" fill="#fff" />
          </Icon>
        </TaskButton>
      </SystemButtons>
      <TaskButton $app aria-label="Edge">
        <Icon w={38} h={38}>
          <defs>
            <linearGradient id="edgeTop" x1="0" y1="0" x2="1" y2="0.600">
              <stop offset="0" stopColor="#1fa0dc" />
              <stop offset="0.500" stopColor="#2fc5d4" />
              <stop offset="1" stopColor="#6ee04e" />
            </linearGradient>
            <linearGradient id="edgeLow" x1="0" y1="0" x2="1" y2="1">
              <stop offset="0" stopColor="#1b94e0" />
              <stop offset="1" stopColor="#0c4e9a" />
            </linearGradient>
          </defs>
          <path d="M1 18C1 10 8 1 19 1C30 1 37 8 37 16C37 23 31 26 26 25C22 24 24 22 24 20C24 14 18 10 12 10C7 10 3 13 1 18Z" fill="url(#edgeTop)" />
          <path d="M1 18C3 12 9 9 14 10C20 11 24 15 24 19C22 14 15 15 15 21C15 27 22 31 34 27C30 34 25 37 19 37C8 37 0 30 1 18Z" fill="url(#edgeLow)" />
          <rect x="1" y="25" width="18" height="12" fill="#d77a09" />
          <rect x="1" y="30" width="18" height="7" fill="#9b5404" />
          <circle cx="10" cy="31" r="1.500" fill="#ffd34e" />
        </Icon>
      </TaskButton>
      <TaskButton $app $open aria-label="Explorateur">
        <Icon w={32} h={27}>
          <path d="M0 0H12L15 3V6H0Z" fill="#e09c00" />
          <path d="M0 5H13L16 2H32V25H0Z" fill="#ffd25e" />
          <path d="M5 27V17Q5 14 8 14H24Q27 14 27 17V27H21V21H11V27Z" fill="#3d94d6" />
        </Icon>
      </TaskButton>
      <TaskButton $app aria-label="Store">
        <Icon w={35} h={36}>
          <path d="M0 4H35V31Q35 36 30 36H5Q0 36 0 31Z" fill="#f1f1f1" />
          <path d="M9 7V1H26V7" stroke="#28b9f2" strokeWidth="2" />
          <rect x="10" y="12" width="7" height="7" fill="#f25022" />
          <rect x="18" y="12" width="7" height="7" fill="#7fba00" />
          <rect x="10" y="20" width="7" height="7" fill="#00a4ef" />
          <rect x="18" y="20" width="7" height="7" fill="#ffb900" />
        </Icon>
      </TaskButton>
      <TaskButton $app aria-label="Outlook">
        <Icon w={36} h={33}>
          <rect x="10" y="0" width="24" height="20" rx="1" fill="#0a5fae" />
          <rect x="18" y="5" width="8" height="7" fill="#28a8ea" />
          <rect x="26" y="5" width="8" height="7" fill="#50d9ff" />
          <rect x="18" y="12" width="16" height="8" fill="#1482d8" />
          <path d="M8 17L22 25L35 17V32H8Z" fill="#1a86d9" />
          <path d="M8 32L35 17V32Z" fill="#3fb2f0" />
          <rect x="0" y="7" width="18" height="19" rx="2" fill="#1274cc" />
          <text x="9" y="22" textAnchor="middle" fontSize="15" fontWeight="700" fill="#fff">O</text>
        </Icon>
      </TaskButton>
      <TaskButton $app $active aria-label="Excel">
        <Icon w={36} h={33}>
          <rect x="8" y="0" width="27" height="32" rx="2" fill="#21a366" />
          <rect x="22" y="0" width="13" height="8" fill="#33c481" />
          <rect x="22" y="8" width="13" height="8" fill="#21a366" />
          <rect x="8" y="16" width="14" height="8" fill="#107c41" />
          <rect x="22" y="16" width="13" height="8" fill="#107c41" />
          <rect x="8" y="24" width="27" height="8" fill="#185c37" />
          <rect x="0" y="7" width="18" height="19" rx="2" fill="#107c41" />
          <text x="9" y="22" textAnchor="middle" fontSize="15" fontWeight="700" fill="#fff">X</text>
        </Icon>
      </TaskButton>
      <TaskButton $app $open aria-label="Acrobat">
        <Icon w={33} h={31}>
          <rect width="33" height="31" rx="5" fill="#b30b00" />
          <AcrobatMark color="#fff" scale={0.8} x={7} y={5} sw={2} />
        </Icon>
      </TaskButton>
      <Tray>
        <Icon w={18} h={11} stroke="#fff" strokeWidth="1.5"><path d="M1 10L9 1L17 10" /></Icon>
        <Icon w={24} h={14}>
          <rect x="1" y="1" width="20" height="12" stroke="#fff" strokeWidth="1.5" />
          <rect x="3" y="3" width="16" height="8" fill="#fff" />
          <rect x="22" y="4" width="2" height="6" fill="#fff" />
        </Icon>
        <Icon w={19} h={18} stroke="#fff" strokeWidth="1.5">
          <path d="M1 18C1 8 8 1 18 1M5 18C5 10 10 5 18 5M9 18C9 13 13 9 18 9M13 18C13 15 15 13 18 13" />
          <circle cx="17" cy="16" r="1" fill="#fff" />
        </Icon>
        <Icon w={20} h={18} stroke="#fff" strokeWidth="1.5">
          <path d="M1 6H4L9 1V17L4 12H1ZM12 5L19 13M19 5L12 13" />
        </Icon>
        <span>FRA</span>
        <Clock>15:23<br />2024-09-28</Clock>
        <Icon w={38} h={46}>
          <path d="M0 8H24V29H14L10 35V29H0Z" fill="#fff" />
          <path d="M5 13H19M5 18H19M5 23H15" stroke="#1b2428" strokeWidth="1.5" />
          <circle cx="24" cy="34" r="11" fill="#2b3438" stroke="#9a9d9f" strokeWidth="1.5" />
          <text x="24" y="40" textAnchor="middle" fontSize="16" fontWeight="700" fill="#fff">1</text>
        </Icon>
        <ShowDesktop />
      </Tray>
    </Taskbar>
  );
}

export default function App() {
  return (
    <Window>
      <Global />
      <Title />
      <Tabs />
      <Ribbon />
      <FormulaBar />
      <Sheet />
      <SheetBar />
      <StatusBar />
      <Tasks />
    </Window>
  );
}
